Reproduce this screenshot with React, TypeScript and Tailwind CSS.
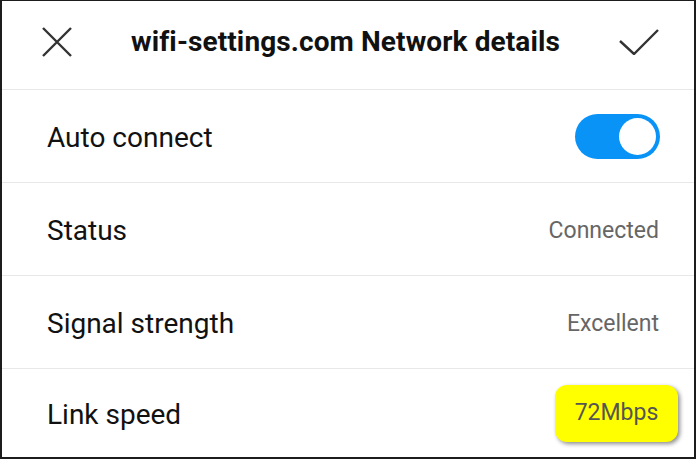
import { useState } from 'react';

const rows = [
  { id: 'status', label: 'Status', value: 'Connected' },
  { id: 'signal', label: 'Signal strength', value: 'Excellent' },
];

const App = () => {
  const [autoConnect, setAutoConnect] = useState(true);

  return (
    <div className="w-[696px] h-[459px] bg-white flex flex-col border-t border-l-2 border-r-2 border-b-2 border-[#1c1c1c] font-['Roboto',_sans-serif] overflow-hidden">
      {/* Header */}
      <div className="h-[89px] shrink-0 flex items-center justify-between pl-[40px] pr-[35px] pb-[7px] border-b border-[#e8e8e8]">
        <svg width="30" height="30" viewBox="0 0 30 30" className="text-[#333]">
          <path d="M1 1 L29 29 M29 1 L1 29" stroke="currentColor" strokeWidth="2.4" fill="none" />
        </svg>
        <h1 className="text-[28px] font-bold text-[#111] tracking-[0.1px]">wifi-settings.com Network details</h1>
        <svg width="40" height="26" viewBox="0 0 40 26" className="text-[#333]">
          <path d="M1 12 L15 25 L39 1" stroke="currentColor" strokeWidth="2.4" fill="none" />
        </svg>
      </div>

      {/* Auto connect */}
      <div className="h-[93px] shrink-0 flex items-center justify-between pl-[45px] pr-[34px] border-b border-[#e8e8e8]">
        <span className="text-[28px] text-[#111] pt-[4px]">Auto connect</span>
        <button
          onClick={() => setAutoConnect(!autoConnect)}
          className={`w-[85px] h-[45px] rounded-full flex items-center px-[4px] ${
            autoConnect ? 'bg-[#0a93f7] justify-end' : 'bg-gray-300 justify-start'
          }`}
        >
          <span className="w-[37px] h-[37px] rounded-full bg-white" />
        </button>
      </div>

      {rows.map((row) => (
        <div
          key={row.id}
          className="h-[93px] shrink-0 flex items-center justify-between pl-[45px] pr-[35px] border-b border-[#e8e8e8]"
        >
          <span className="text-[28px] text-[#111] pt-[4px]">{row.label}</span>
          <span className="text-[23px] text-[#666] pt-[4px]">{row.value}</span>
        </div>
      ))}

      {/* Link speed */}
      <div className="flex-1 flex items-center justify-between pl-[45px] pr-[16px]">
        <span className="text-[28px] text-[#111] pt-[4px]">Link speed</span>
        <span className="w-[123px] h-[57px] rounded-[12px] bg-[#ffff00] flex items-center justify-center text-[23px] text-[#555] shadow-[2px_2px_4px_rgba(0,0,0,0.45)]">
          72Mbps
        </span>
      </div>
    </div>
  );
};

export default App;
